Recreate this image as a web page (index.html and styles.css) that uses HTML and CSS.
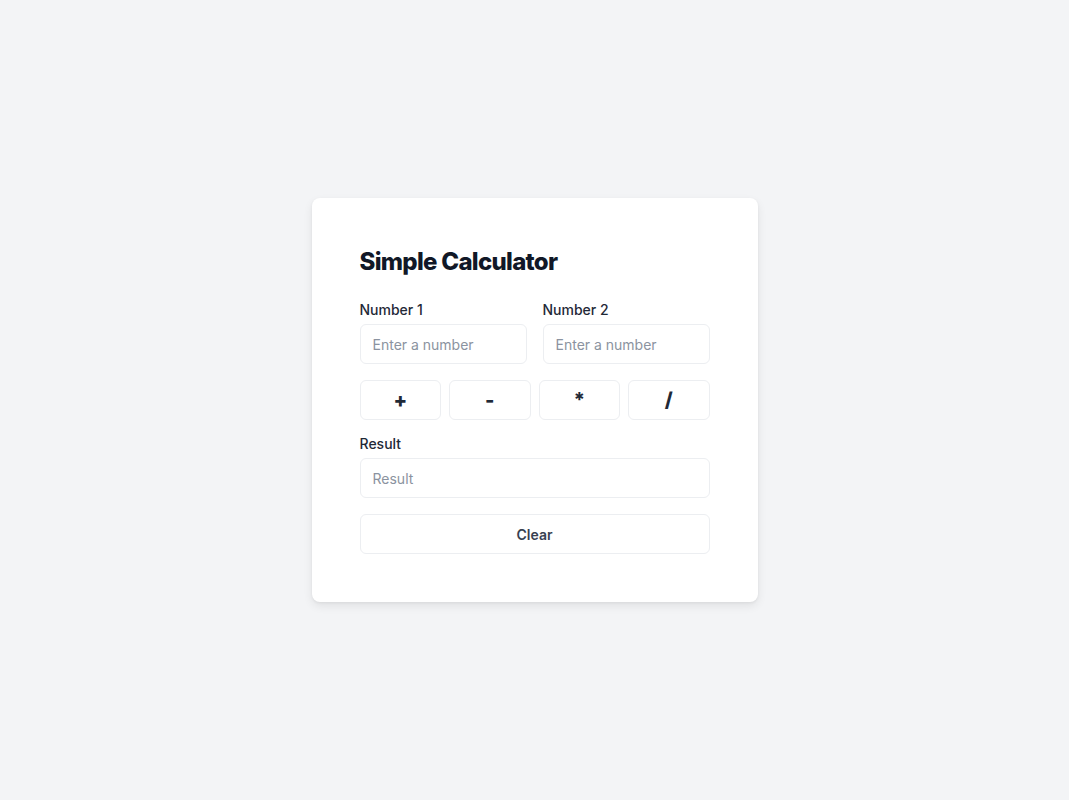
FILE: index.html
```html
<!DOCTYPE html>
<html lang="en">
<head>
<meta charset="utf-8">
<title>Simple Calculator</title>
<link rel="stylesheet" href="styles.css">
</head>
<body>
<main class="page">
  <section class="card">
    <h1 class="title">Simple Calculator</h1>
    <div class="inputs">
      <div class="field">
        <label class="label" for="n1">Number 1</label>
        <input class="input" id="n1" type="text" placeholder="Enter a number">
      </div>
      <div class="field">
        <label class="label" for="n2">Number 2</label>
        <input class="input" id="n2" type="text" placeholder="Enter a number">
      </div>
    </div>
    <div class="ops">
      <button class="op">+</button>
      <button class="op">-</button>
      <button class="op">*</button>
      <button class="op">/</button>
    </div>
    <div class="field result-field">
      <label class="label" for="res">Result</label>
      <input class="input" id="res" type="text" placeholder="Result" readonly>
    </div>
    <button class="clear">Clear</button>
  </section>
</main>
</body>
</html>
```

FILE: styles.css
```css
* { box-sizing: border-box; }
html, body { margin: 0; padding: 0; }
body {
  background: #f3f4f6;
  font-family: Inter, "Noto Sans", sans-serif;
  color: #111827;
}
.page {
  min-height: 100vh;
  display: flex;
  align-items: center;
  justify-content: center;
}
.card {
  width: 446px;
  background: #ffffff;
  border-radius: 8px;
  padding: 48px;
  box-shadow: 0 4px 10px rgba(0,0,0,0.08), 0 1px 3px rgba(0,0,0,0.05);
}
.title {
  margin: 0 0 22px;
  font-size: 24px;
  line-height: 32px;
  font-weight: 800;
  letter-spacing: -0.7px;
  color: #111827;
}
.inputs {
  display: grid;
  grid-template-columns: 1fr 1fr;
  gap: 16px;
  margin-bottom: 16px;
}
.field { display: flex; flex-direction: column; min-width: 0; }
.label {
  font-size: 14px;
  line-height: 20px;
  font-weight: 500;
  color: #1f2937;
  margin-bottom: 4px;
}
.input {
  width: 100%;
  min-width: 0;
  height: 40px;
  border: 1px solid #eceef1;
  border-radius: 6px;
  padding: 0 12px;
  font-family: inherit;
  font-size: 14px;
  color: #111827;
  background: #fff;
  outline: none;
}
.input::placeholder { color: #8b93a0; }
.ops {
  display: grid;
  grid-template-columns: repeat(4, 1fr);
  gap: 8px;
  margin-bottom: 14px;
}
.op {
  height: 40px;
  border: 1px solid #eceef1;
  border-radius: 6px;
  background: #fff;
  font-family: Inter, "Noto Sans", sans-serif;
  font-size: 20px;
  font-weight: 800;
  color: #1f2937;
  cursor: pointer;
}
.result-field { margin-bottom: 16px; }
.clear {
  width: 100%;
  height: 40px;
  border: 1px solid #eceef1;
  border-radius: 6px;
  background: #fff;
  font-family: inherit;
  font-size: 14px;
  font-weight: 600;
  color: #374151;
  cursor: pointer;
}
```
